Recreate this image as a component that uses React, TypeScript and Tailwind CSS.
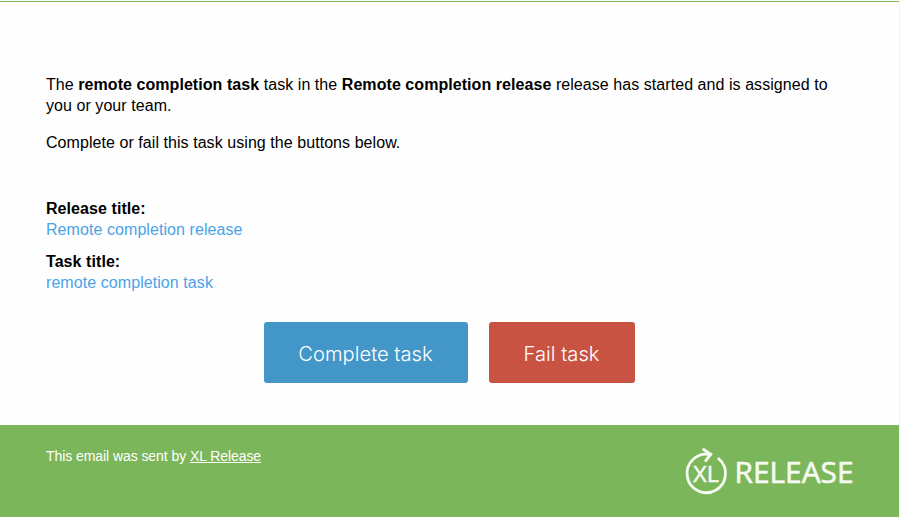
export default function App() {
  return (
    <div className="flex h-[517px] w-[900px] flex-col overflow-hidden border-r border-[#f3f3f3] bg-[#fefefe] font-['Liberation_Sans',Arial,sans-serif] text-[16px] leading-[21px] text-black">
      <div className="mt-px h-px shrink-0 bg-[#7cb65a]" />
      <main className="h-[423px] shrink-0 px-[46px] pt-[72px]">
        <p className="tracking-[0.06px]">
          The <b>remote completion task</b> task in the <b>Remote completion release</b> release has started and is assigned to
          <br />
          you or your team.
        </p>
        <p className="mt-4 tracking-[0.06px]">Complete or fail this task using the buttons below.</p>
        <section className="mt-[45px] tracking-[0.07px]">
          <h2 className="font-bold">Release title:</h2>
          <a className="text-[#4ba3e7]">Remote completion release</a>
        </section>
        <section className="mt-[11px] tracking-[0.07px]">
          <h2 className="font-bold">Task title:</h2>
          <a className="text-[#4ba3e7]">remote completion task</a>
        </section>
        <div className="mt-[29px] mr-px flex justify-center gap-[21px] font-['Inter',sans-serif] text-[20.2px] font-light text-white">
          <button className="h-[61px] w-[204px] rounded-[3px] bg-[#4296c8] pt-[2px]">Complete task</button>
          <button className="h-[61px] w-[146px] rounded-[3px] bg-[#c85343] pt-[2px]">Fail task</button>
        </div>
      </main>
      <footer className="flex flex-1 justify-between bg-[#7cb65a] pr-[45px] pl-[46px] text-white">
        <p className="pt-[21px] text-[14px] tracking-[-0.07px]">
          This email was sent by <a className="underline">XL Release</a>
        </p>
        <svg className="mt-[20px] h-[52px] w-[172px]" viewBox="682 445 172 52" fill="none" stroke="#f5faf2">
          <path d="M718.7 458.8 A19.2 19.2 0 1 1 710 454.6" strokeWidth="2.8" strokeLinecap="round" />
          <path d="M703.6 449.6 L710.7 454.4 L705.8 460.6" strokeWidth="3" strokeLinecap="round" />
          <text x="693.3" y="482.4" fontSize="21.5" textLength="25.5" lengthAdjust="spacingAndGlyphs" fontFamily="Open Sans" fill="#f5faf2" strokeWidth="0.5">XL</text>
          <text x="734.5" y="482.6" fontSize="29" textLength="119" lengthAdjust="spacingAndGlyphs" fontFamily="Open Sans" fill="#f5faf2" strokeWidth="0.6">RELEASE</text>
        </svg>
      </footer>
    </div>
  );
}
